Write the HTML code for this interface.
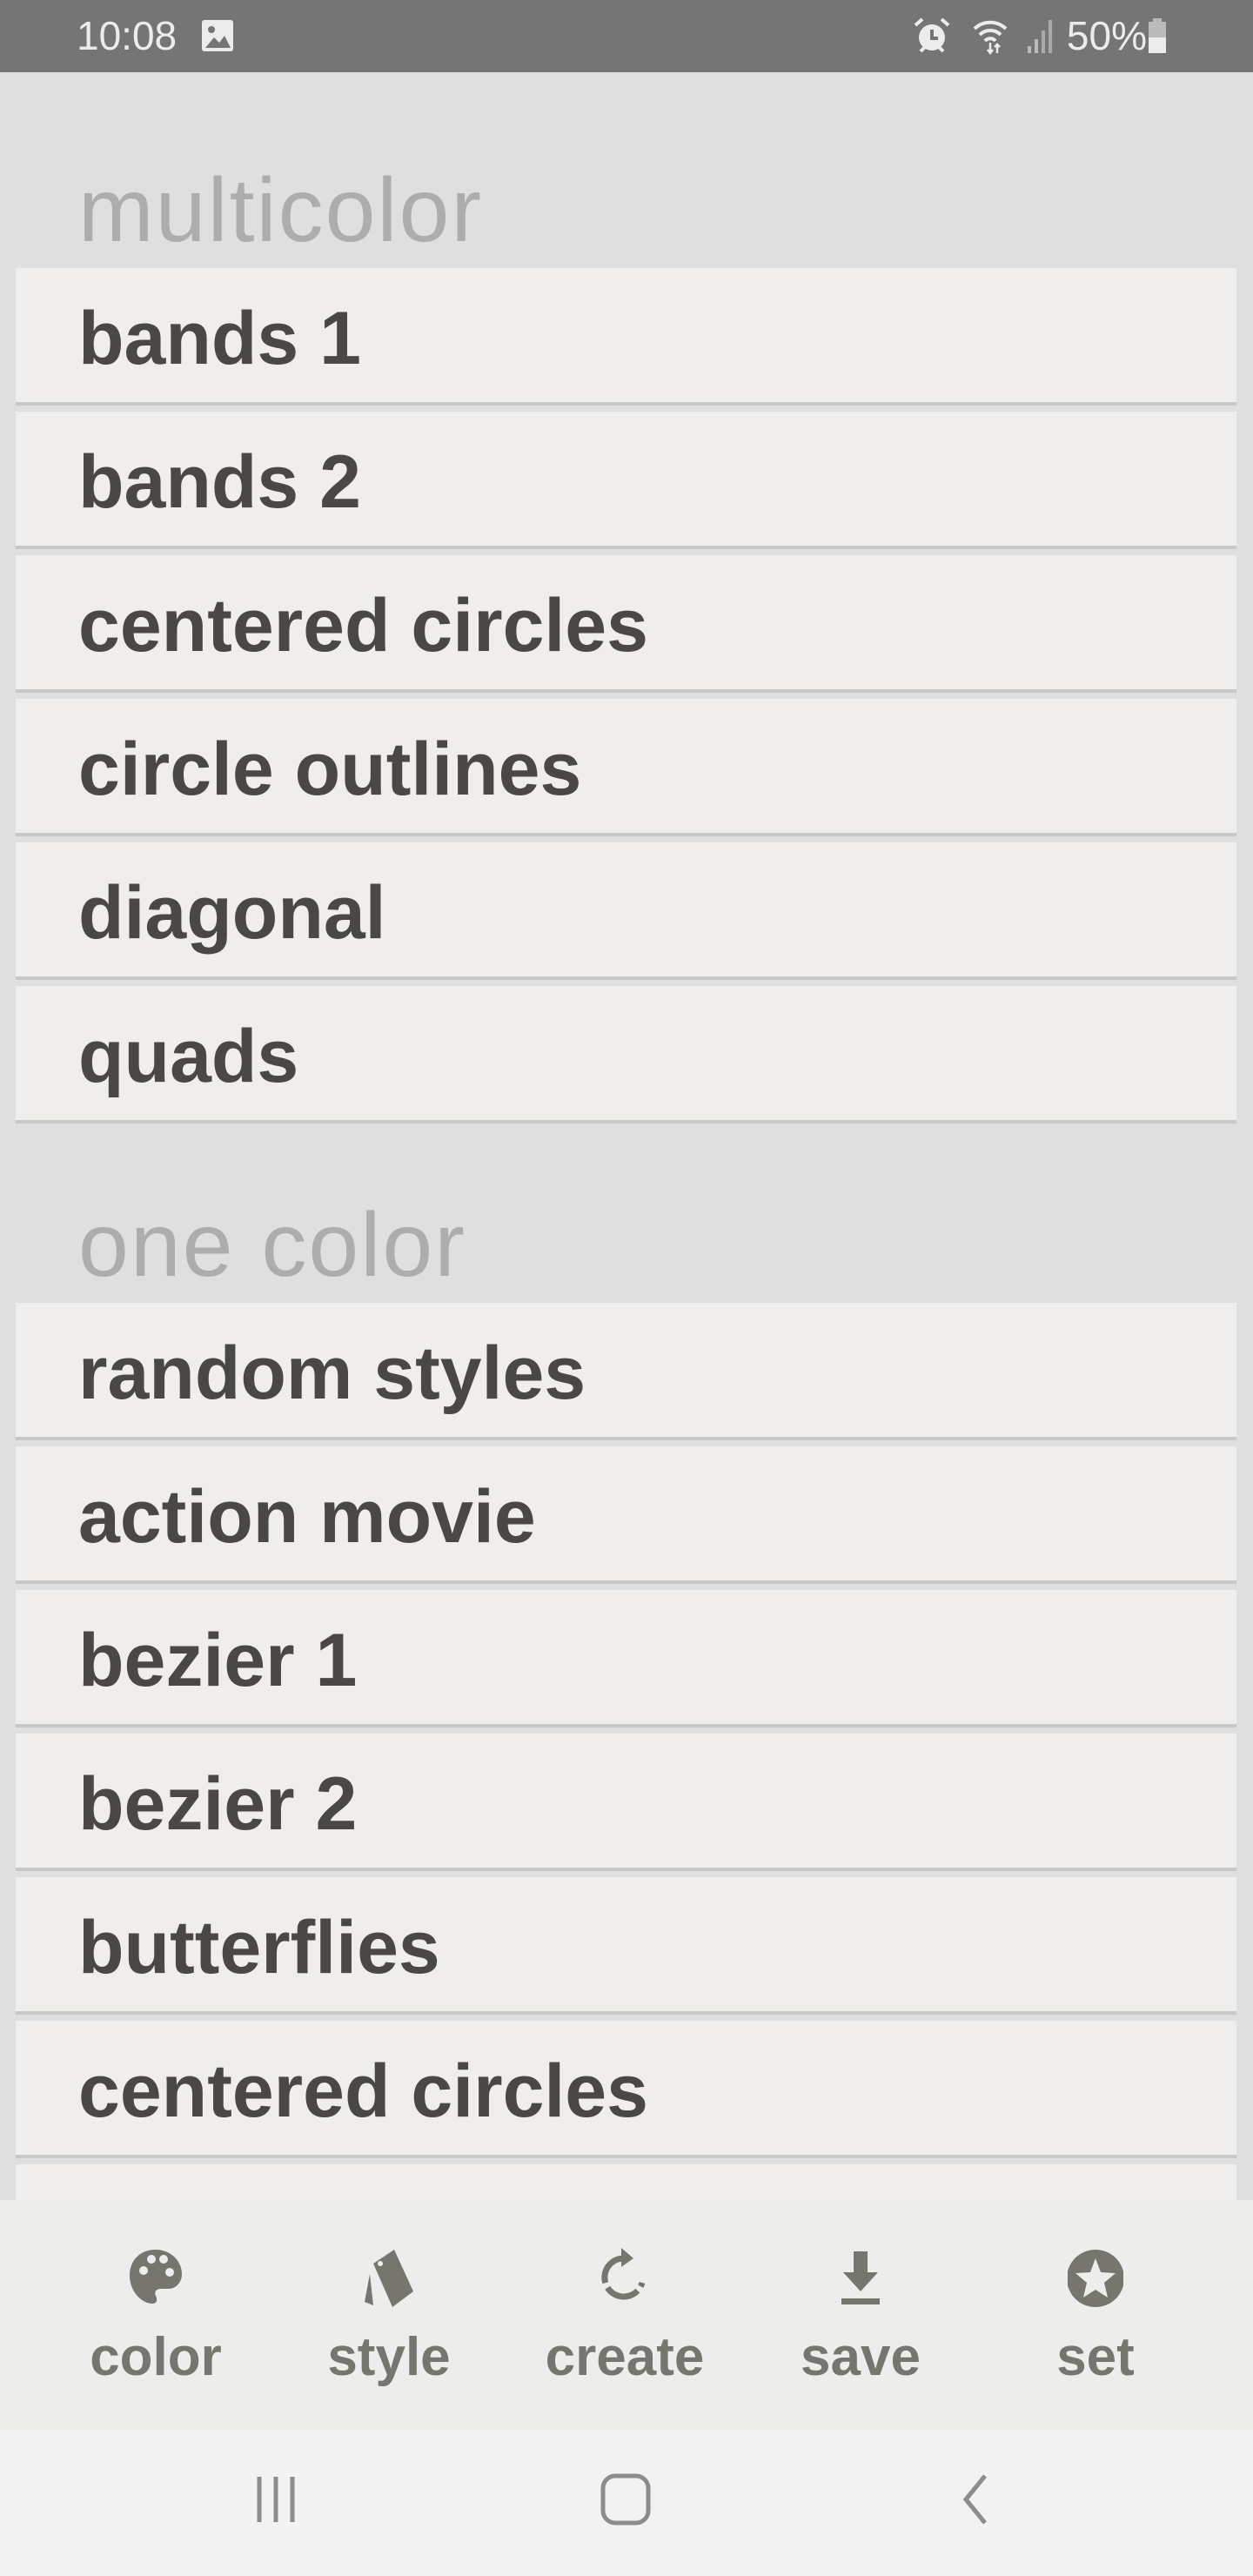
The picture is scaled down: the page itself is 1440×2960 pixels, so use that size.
<!DOCTYPE html>
<html><head><meta charset="utf-8"><style>
*{margin:0;padding:0;box-sizing:border-box}
body{width:1440px;height:2960px;overflow:hidden;background:#dfdfdf;font-family:"Liberation Sans",sans-serif;position:relative}
.status{position:absolute;left:0;top:0;width:1440px;height:83px;background:#757575;color:#ececec;font-size:46px}
.status .t{position:absolute;left:88px;top:14px}
.status .b{position:absolute;right:98px;top:14px}
.h{position:absolute;left:90px;font-size:104px;letter-spacing:2px;color:#adadad;line-height:1}
.card{position:absolute;left:18px;width:1403px;height:158px;background:#efeeec;border-bottom:4px solid #c8c8c6;font-weight:bold;font-size:86px;color:#4a4843;padding-left:72px;line-height:158px;padding-top:2px}
.bar{position:absolute;left:0;top:2528px;width:1440px;height:264px;background:#ededeb}
.it{position:absolute;top:0;width:260px;text-align:center;color:#77766e;font-weight:bold;font-size:62px}
.it svg{position:absolute;left:98px;top:55px}
.it span{position:absolute;left:0;right:0;top:145px}
.sys{position:absolute;left:0;top:2792px;width:1440px;height:168px;background:#f2f2f2}
</style></head><body>
<div class="status"><span class="t">10:08 <svg width="40" height="40" viewBox="0 0 40 40" style="vertical-align:-4px;margin-left:14px"><rect x="2" y="2" width="36" height="36" rx="3" fill="#ececec"/><circle cx="13" cy="13" r="4" fill="#757575"/><path d="M6 34 L16 22 L22 28 L28 20 L35 34Z" fill="#757575"/></svg></span>
<span class="b"><svg width="46" height="44" viewBox="0 0 46 44" style="vertical-align:-6px"><circle cx="23" cy="24" r="15" fill="#ececec"/><path d="M23 15v10h7" stroke="#757575" stroke-width="4" fill="none"/><path d="M4 10 L12 3 M42 10 L34 3" stroke="#ececec" stroke-width="4"/><path d="M10 40l5-5M36 40l-5-5" stroke="#ececec" stroke-width="4"/></svg>
<svg width="50" height="44" viewBox="0 0 50 44" style="vertical-align:-6px;margin-left:10px"><path d="M4 14a26 26 0 0 1 36 0M10 21a17 17 0 0 1 24 0M16 28a8 8 0 0 1 12 0" stroke="#ececec" stroke-width="4" fill="none"/><path d="M22 30v12M19 38l3 4 3-4M30 42V32M27 35l3-3 3 3" stroke="#ececec" stroke-width="2.5" fill="none"/></svg>
<svg width="34" height="44" viewBox="0 0 34 44" style="vertical-align:-6px"><rect x="2" y="34" width="4" height="8" fill="#bbb"/><rect x="10" y="26" width="4" height="16" fill="#bbb"/><rect x="18" y="16" width="4" height="26" fill="#aaa"/><rect x="26" y="4" width="4" height="38" fill="#aaa"/></svg> 50%<svg width="24" height="40" viewBox="0 0 24 40" style="vertical-align:-4px"><rect x="7" y="0" width="10" height="4" fill="#bbb"/><rect x="2" y="4" width="20" height="36" fill="#bbb"/><rect x="2" y="22" width="20" height="18" fill="#ececec"/></svg></span></div>

<div class="h" style="top:190px">multicolor</div>
<div class="card" style="top:308px">bands 1</div>
<div class="card" style="top:473px">bands 2</div>
<div class="card" style="top:638px">centered circles</div>
<div class="card" style="top:803px">circle outlines</div>
<div class="card" style="top:968px">diagonal</div>
<div class="card" style="top:1133px">quads</div>
<div class="h" style="top:1379px">one color</div>
<div class="card" style="top:1497px">random styles</div>
<div class="card" style="top:1662px">action movie</div>
<div class="card" style="top:1827px">bezier 1</div>
<div class="card" style="top:1992px">bezier 2</div>
<div class="card" style="top:2157px">butterflies</div>
<div class="card" style="top:2322px">centered circles</div>
<div class="card" style="top:2487px"></div>

<div class="bar">
<div class="it" style="left:49px"><svg width="64" height="70" viewBox="0 0 64 70"><path d="M32 2C14 2 2 14 2 32c0 18 14 32 26 32 6 0 6-5 4-9-2-4 0-8 6-8h8c10 0 16-8 16-17C62 14 48 2 32 2z" fill="#77766e"/><circle cx="18" cy="26" r="5" fill="#ededeb"/><circle cx="27" cy="13" r="5" fill="#ededeb"/><circle cx="41" cy="13" r="5" fill="#ededeb"/><circle cx="48" cy="28" r="5" fill="#ededeb"/></svg><span>color</span></div>
<div class="it" style="left:317px"><svg width="64" height="70" viewBox="0 0 64 70"><path d="M14 18 L38 2 L60 50 L36 68 Z" fill="#77766e"/><path d="M10 30 L4 62 L14 66 Z" fill="#77766e"/><circle cx="22" cy="18" r="3" fill="#ededeb"/></svg><span>style</span></div>
<div class="it" style="left:588px"><svg width="64" height="70" viewBox="0 0 64 70"><path d="M30 12 A22 22 0 1 0 52 40" fill="none" stroke="#77766e" stroke-width="7" stroke-dasharray="40 6"/><path d="M28 0 L42 12 L28 22 Z" fill="#77766e"/></svg><span>create</span></div>
<div class="it" style="left:859px"><svg width="64" height="70" viewBox="0 0 64 70"><path d="M24 4h16v24h12L32 50 12 28h12z" fill="#77766e"/><rect x="10" y="58" width="44" height="7" fill="#77766e"/></svg><span>save</span></div>
<div class="it" style="left:1129px"><svg width="64" height="70" viewBox="0 0 64 70"><circle cx="32" cy="35" r="33" fill="#77766e"/><path d="M32 12 L38 28 L55 29 L42 40 L46 57 L32 48 L18 57 L22 40 L9 29 L26 28 Z" fill="#ededeb"/></svg><span>set</span></div>
</div>

<div class="sys">
<svg style="position:absolute;left:290px;top:52px" width="56" height="56" viewBox="0 0 56 56"><path d="M8 2v52M27 2v52M46 2v52" stroke="#8c8c8c" stroke-width="5"/></svg>
<svg style="position:absolute;left:690px;top:50px" width="58" height="60" viewBox="0 0 58 60"><rect x="3" y="3" width="52" height="54" rx="14" fill="none" stroke="#8c8c8c" stroke-width="5"/></svg>
<svg style="position:absolute;left:1100px;top:50px" width="40" height="60" viewBox="0 0 40 60"><path d="M32 3 L10 30 L32 57" fill="none" stroke="#8c8c8c" stroke-width="5"/></svg>
</div>
</body></html>
